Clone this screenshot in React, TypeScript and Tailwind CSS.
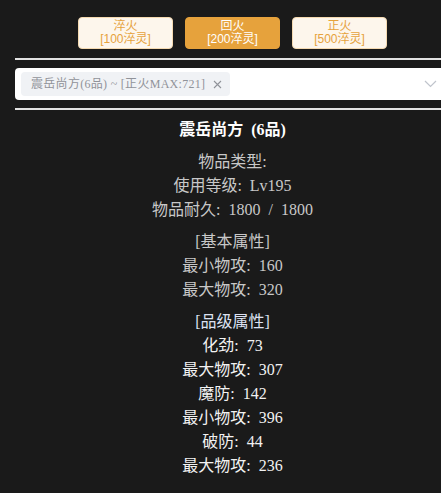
import React from "react";

const serif = {
  fontFamily: "'Liberation Serif', 'Noto Sans CJK SC', serif",
};

function Btn({ title, sub, active }: { title: string; sub: string; active?: boolean }) {
  return (
    <button
      className={
        "flex h-[32px] w-[95px] flex-col items-center justify-center rounded-[4px] border text-[12px] leading-[13px] " +
        (active
          ? "border-[#e6a23c] bg-[#e6a23c] text-white"
          : "border-[#f5dab1] bg-[#fdf6ec] text-[#e6a23c]")
      }
      style={{ fontFamily: "'Liberation Sans', 'Noto Sans CJK SC', sans-serif" }}
    >
      <span>{title}</span>
      <span>{sub}</span>
    </button>
  );
}

export default function App() {
  const basic = ["最小物攻: 160", "最大物攻: 320"];
  const grade = ["化劲: 73", "最大物攻: 307", "魔防: 142", "最小物攻: 396", "破防: 44", "最大物攻: 236"];
  return (
    <div className="h-[493px] w-[441px] overflow-hidden bg-[#1a1a1a]">
      <div className="ml-[15px] w-[435px]">
        <div className="flex justify-center gap-[12px] pt-[17px]">
          <Btn title="淬火" sub="[100淬灵]" />
          <Btn title="回火" sub="[200淬灵]" active />
          <Btn title="正火" sub="[500淬灵]" />
        </div>
        <div className="mt-[9px] h-[2px] bg-[#e2e2e2]" />
        <div className="mt-[8px] flex h-[32px] items-center rounded-[4px] bg-white pl-[6px] pr-[13px]">
          <div
            className="flex h-[24px] w-[209px] items-center rounded-[4px] bg-[#f0f2f5] pl-[10px] text-[12px] text-[#909399]"
            style={serif}
          >
            <span className="whitespace-nowrap tracking-[0.3px]">震岳尚方(6品) ~ [正火MAX:721]</span>
            <svg className="ml-auto mr-[8px]" width="9" height="9" viewBox="0 0 9 9">
              <path d="M1 1 L8 8 M8 1 L1 8" stroke="#909399" strokeWidth="1.1" />
            </svg>
          </div>
          <svg className="ml-auto" width="13" height="8" viewBox="0 0 13 8">
            <path d="M1 1 L6.5 6.5 L12 1" stroke="#c0c4cc" strokeWidth="1.2" fill="none" />
          </svg>
        </div>
        <div className="mt-[8px] h-[2px] bg-[#e2e2e2]" />
        <div className="pt-[8px] text-center text-[16px] leading-[24px] [word-spacing:4px]" style={serif}>
          <div className="font-semibold text-white">震岳尚方 (6品)</div>
          <div className="mt-[8px] text-[#c8c8c8]">
            <div>物品类型:</div>
            <div>使用等级: Lv195</div>
            <div>物品耐久: 1800 / 1800</div>
          </div>
          <div className="mt-[8px] text-[#c8c8c8]">
            <div>[基本属性]</div>
            {basic.map((t, i) => (
              <div key={i}>{t}</div>
            ))}
          </div>
          <div className="mt-[8px] text-[#f2f2f2]">
            <div className="text-[#dde2f2]">[品级属性]</div>
            {grade.map((t, i) => (
              <div key={i}>{t}</div>
            ))}
          </div>
        </div>
      </div>
    </div>
  );
}
